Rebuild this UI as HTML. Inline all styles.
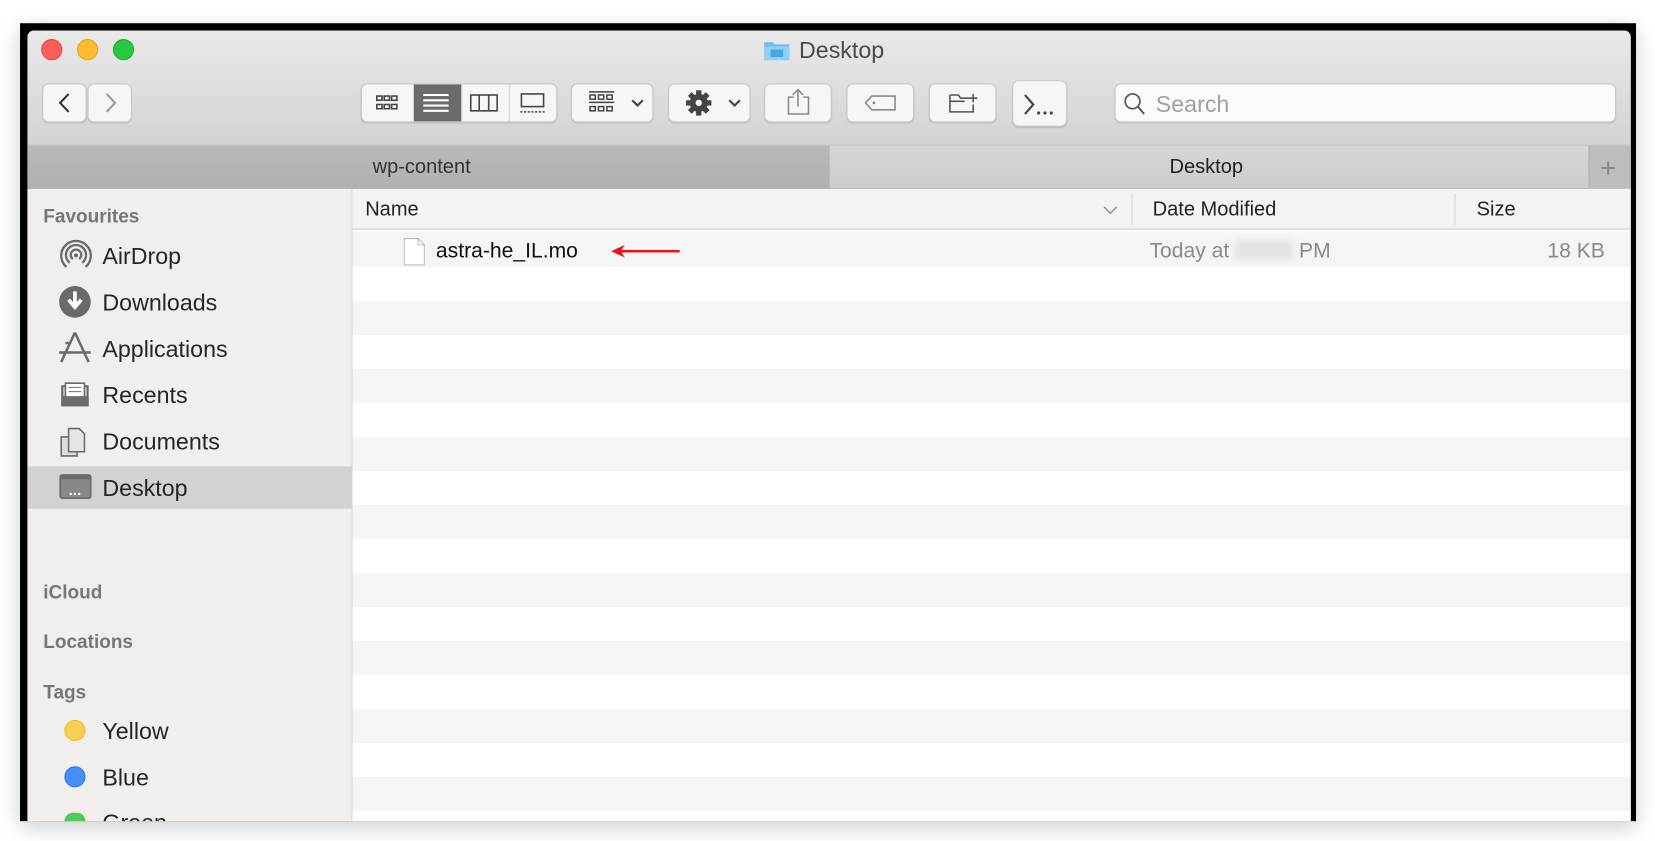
<!DOCTYPE html>
<html><head><meta charset="utf-8"><style>
*{margin:0;padding:0;box-sizing:border-box}
html,body{width:1655px;height:841px;overflow:hidden;background:#fff;font-family:"Liberation Sans",Helvetica,Arial,sans-serif}
#s{position:absolute;left:0;top:0;width:1568px;height:797px;transform:scale(1.0555);transform-origin:0 0}
.a{position:absolute}
.btn{position:absolute;background:#f6f6f6;border:1px solid #c9c9c9;border-radius:6px;box-shadow:0 1px 1px rgba(0,0,0,.12)}
.t{position:absolute;font-size:22px;color:#262626;white-space:nowrap}
.h{position:absolute;font-size:18px;color:#7a7676;font-weight:bold}
.ic{position:absolute}
</style></head><body><div id="s">
<div class="a" style="left:19px;top:22px;width:1531px;height:756px;background:#000;box-shadow:0 6px 20px rgba(0,0,0,.2)"></div>
<div class="a" style="left:26px;top:29px;width:1519px;height:749px;background:#fff;border-radius:6px 6px 0 0;overflow:hidden">
 <div class="a" style="left:0;top:0;width:1519px;height:109px;background:linear-gradient(#e9e9e9,#d3d3d3);border-bottom:1px solid #b8b8b8"></div>
</div>
<div class="a" style="left:39px;top:37px;width:20px;height:20px;border-radius:50%;background:#fd5f57;border:1px solid #e0443e"></div>
<div class="a" style="left:73px;top:37px;width:20px;height:20px;border-radius:50%;background:#febc2e;border:1px solid #dea123"></div>
<div class="a" style="left:107px;top:37px;width:20px;height:20px;border-radius:50%;background:#28c840;border:1px solid #1aab29"></div>
<svg class="ic" style="left:723px;top:37px" width="26" height="21"><path d="M1 3h8l2 2h14v15H1z" fill="#6fbdf0"/><rect x="1" y="7" width="24" height="13" fill="#8fd0f8"/><rect x="7" y="10" width="12" height="7" fill="#4aa5e0"/></svg>
<div class="t" style="left:757px;top:35px;color:#4a4a4a">Desktop</div>
<div class="btn" style="left:40px;top:79px;width:42px;height:37px"></div>
<div class="btn" style="left:83px;top:79px;width:42px;height:37px"></div>
<svg class="ic" style="left:40px;top:79px" width="86" height="37"><path d="M25 10l-8 8.5 8 8.5" stroke="#333" stroke-width="2" fill="none"/><path d="M61 10l8 8.5-8 8.5" stroke="#9a9a9a" stroke-width="2" fill="none"/></svg>
<div class="btn" style="left:342px;top:79px;width:186px;height:37px;overflow:hidden">
 <div class="a" style="left:49px;top:-1px;width:45px;height:39px;background:#6b6b6b"></div>
 <div class="a" style="left:94px;top:0;width:1px;height:37px;background:#d0d0d0"></div>
 <div class="a" style="left:139px;top:0;width:1px;height:37px;background:#d0d0d0"></div>
</div>
<svg class="ic" style="left:342px;top:79px" width="186" height="37"><g fill="none" stroke="#444" stroke-width="1.5"><rect x="15" y="12" width="5" height="4"/><rect x="22" y="12" width="5" height="4"/><rect x="29" y="12" width="5" height="4"/><rect x="15" y="20" width="5" height="4"/><rect x="22" y="20" width="5" height="4"/><rect x="29" y="20" width="5" height="4"/><rect x="104" y="11" width="25" height="15"/><path d="M112 11v15M121 11v15"/><rect x="152" y="10" width="21" height="12"/><path d="M151 27h24" stroke-dasharray="2 1.5"/></g><path d="M59 11h24M59 16h24M59 21h24M59 26h24" stroke="#fff" stroke-width="2"/></svg>
<div class="btn" style="left:541px;top:79px;width:78px;height:37px"></div>
<svg class="ic" style="left:541px;top:79px" width="78" height="37"><g fill="none" stroke="#444" stroke-width="1.4"><path d="M17 8h24M17 18h24"/><rect x="18" y="11" width="5" height="4"/><rect x="26" y="11" width="5" height="4"/><rect x="34" y="11" width="5" height="4"/><rect x="18" y="22" width="5" height="4"/><rect x="26" y="22" width="5" height="4"/><rect x="34" y="22" width="5" height="4"/><path d="M58 16l5 5 5-5" stroke-width="2"/></g></svg>
<div class="btn" style="left:633px;top:79px;width:78px;height:37px"></div>
<svg class="ic" style="left:633px;top:79px" width="78" height="37"><g transform="translate(29 18.5)"><circle r="8.5" fill="#444"/><g fill="#444"><rect x="-2.5" y="-12" width="5" height="24"/><rect x="-2.5" y="-12" width="5" height="24" transform="rotate(45)"/><rect x="-2.5" y="-12" width="5" height="24" transform="rotate(90)"/><rect x="-2.5" y="-12" width="5" height="24" transform="rotate(135)"/></g><circle r="3" fill="#f6f6f6"/></g><path d="M58 16l5 5 5-5" stroke="#444" stroke-width="2" fill="none"/></svg>
<div class="btn" style="left:724px;top:79px;width:64px;height:37px"></div>
<svg class="ic" style="left:724px;top:79px" width="64" height="37"><path d="M28 13h-5v16h19V13h-5M32 6v16M27 11l5-5 5 5" stroke="#8a8a8a" stroke-width="1.5" fill="none"/></svg>
<div class="btn" style="left:802px;top:79px;width:64px;height:37px"></div>
<svg class="ic" style="left:802px;top:79px" width="64" height="37"><path d="M24 12h22v13H24l-6-6.5z" stroke="#8a8a8a" stroke-width="1.5" fill="none"/><circle cx="26" cy="18.5" r="1.3" fill="#8a8a8a"/></svg>
<div class="btn" style="left:880px;top:79px;width:64px;height:37px"></div>
<svg class="ic" style="left:880px;top:79px" width="64" height="37"><path d="M20 11h8l2 3h11M20 11v16h22v-7M20 17h14M42 10v8M38 14h8" stroke="#555" stroke-width="1.5" fill="none"/></svg>
<div class="btn" style="left:959px;top:76px;width:52px;height:44px"></div>
<svg class="ic" style="left:959px;top:76px" width="52" height="44"><path d="M12 14l8 9-8 9" stroke="#444" stroke-width="2" fill="none"/><circle cx="25" cy="31" r="1.5" fill="#444"/><circle cx="31" cy="31" r="1.5" fill="#444"/><circle cx="37" cy="31" r="1.5" fill="#444"/></svg>
<div class="btn" style="left:1056px;top:79px;width:475px;height:37px;background:#fafafa"></div>
<svg class="ic" style="left:1064px;top:87px" width="24" height="24"><circle cx="9" cy="9" r="7" stroke="#555" stroke-width="1.6" fill="none"/><path d="M14 14l6 7" stroke="#555" stroke-width="1.8"/></svg>
<div class="t" style="left:1095px;top:86px;color:#a0a0a0">Search</div>
<!-- tabs -->
<div class="a" style="left:26px;top:138px;width:759px;height:41px;background:linear-gradient(#b9b9b9,#b0b0b0);border-bottom:1px solid #a7a7a7"></div>
<div class="a" style="left:785px;top:138px;width:720px;height:41px;background:linear-gradient(#d6d6d6,#cdcdcd);border-left:1px solid #a9a9a9;border-bottom:1px solid #b0b0b0"></div>
<div class="a" style="left:1505px;top:138px;width:40px;height:41px;background:#bdbdbd;border-left:1px solid #a9a9a9"></div>
<div class="t" style="left:1516px;top:144px;color:#8a8a8a;font-size:26px">+</div>
<div class="t" style="left:353px;top:148px;font-size:19px;color:#333">wp-content</div>
<div class="t" style="left:1108px;top:148px;font-size:19px;color:#222">Desktop</div>
<!-- sidebar -->
<div class="a" style="left:26px;top:179px;width:308px;height:599px;background:#f1eeeb;border-right:1px solid #d6d4d2"></div>
<div class="a" style="left:26px;top:442px;width:307px;height:40px;background:#d4d1ce"></div>
<div class="h" style="left:41px;top:195px">Favourites</div>
<div class="t" style="left:97px;top:230px">AirDrop</div>
<div class="t" style="left:97px;top:274px">Downloads</div>
<div class="t" style="left:97px;top:318px">Applications</div>
<div class="t" style="left:97px;top:362px">Recents</div>
<div class="t" style="left:97px;top:406px">Documents</div>
<div class="t" style="left:97px;top:450px">Desktop</div>
<div class="h" style="left:41px;top:551px">iCloud</div>
<div class="h" style="left:41px;top:598px">Locations</div>
<div class="h" style="left:41px;top:646px">Tags</div>
<div class="a" style="left:61px;top:682px;width:20px;height:20px;border-radius:50%;background:#f8cf52;border:1px solid #f0bb20"></div>
<div class="t" style="left:97px;top:680px">Yellow</div>
<div class="a" style="left:61px;top:726px;width:20px;height:20px;border-radius:50%;background:#478ef8;border:1px solid #2a76ef"></div>
<div class="t" style="left:97px;top:724px">Blue</div>
<div class="a" style="left:61px;top:770px;width:20px;height:8px;border-radius:10px 10px 0 0;background:#4fcb5a"></div>
<div class="a" style="left:97px;top:767px;height:11px;overflow:hidden"><div style="font-size:22px;color:#262626">Green</div></div>
<svg class="ic" style="left:55px;top:226px" width="34" height="250"><g fill="none" stroke="#6c6a68" stroke-width="2.2"><path d="M8 27a14 14 0 1 1 18 0M11 23a9.5 9.5 0 1 1 12 0M14 19.5a5 5 0 1 1 6 0"/></g><circle cx="17" cy="16" r="2" fill="#6c6a68"/>
<circle cx="16" cy="60" r="15" fill="#6c6a68"/><path d="M16 50v14M10 58l6 7 6-7" stroke="#fff" stroke-width="3.5" fill="none"/>
<g stroke="#6c6a68" stroke-width="2.4" fill="none"><path d="M16 89L3 117M16 89l13 28M1 108h30M10 99l-3 0"/></g>
<path d="M4 140h24v18H4zM4 150h24" stroke="#6c6a68" stroke-width="2" fill="#dcd9d6"/><path d="M7 137h18v13H7z" fill="#fff" stroke="#6c6a68" stroke-width="1.5"/><path d="M10 141h12M10 145h12" stroke="#6c6a68"/><rect x="3" y="151" width="26" height="8" fill="#6c6a68"/>
<path d="M3 188h11l4 4v14H3z" fill="#ddd" stroke="#6c6a68" stroke-width="1.5"/><path d="M10 180h10l5 5v17H10z" fill="#e8e6e4" stroke="#6c6a68" stroke-width="1.5"/>
<rect x="2" y="224" width="29" height="22" rx="2" fill="#8a8886" stroke="#6c6a68" stroke-width="1.5"/><rect x="2" y="224" width="29" height="4" fill="#6c6a68"/><path d="M11 242h2M15 242h2M19 242h2" stroke="#fff" stroke-width="2"/></svg>
<!-- list header -->
<div class="a" style="left:334px;top:179px;width:1211px;height:39px;background:#f3f3f3;border-bottom:2px solid #e0e0e0"></div>
<div class="a" style="left:1072px;top:183px;width:1px;height:30px;background:#d6d6d6"></div>
<div class="a" style="left:1378px;top:183px;width:1px;height:30px;background:#d6d6d6"></div>
<div class="t" style="left:346px;top:188px;font-size:19px;color:#222">Name</div>
<svg class="ic" style="left:1045px;top:194px" width="14" height="10"><path d="M1 2l6 6 6-6" stroke="#999" stroke-width="1.5" fill="none"/></svg>
<div class="t" style="left:1092px;top:188px;font-size:19px;color:#222">Date Modified</div>
<div class="t" style="left:1399px;top:188px;font-size:19px;color:#222">Size</div>
<!-- rows -->
<div class="a" style="left:334px;top:220px;width:1211px;height:33px;background:#f4f5f5"></div>
<div class="a" style="left:334px;top:253px;width:1211px;height:525px;background:repeating-linear-gradient(#fff 0 32.2px,#f4f5f5 32.2px 64.4px);"></div>
<svg class="ic" style="left:382px;top:225px" width="22" height="27"><path d="M1 1h13l6 6v19H1z" fill="#fff" stroke="#bdbdbd"/><path d="M14 1v6h6" fill="none" stroke="#bdbdbd"/></svg>
<div class="t" style="left:413px;top:227px;font-size:20px;color:#111">astra-he_IL.mo</div>
<svg class="ic" style="left:578px;top:230px" width="68" height="16"><path d="M66 8H8" stroke="#e8141a" stroke-width="2.5"/><path d="M1 8l13-6-4 6 4 6z" fill="#e8141a"/></svg>
<div class="t" style="left:1089px;top:227px;font-size:20px;color:#8a8a8a">Today at <span style="display:inline-block;width:55px;height:18px;background:#e3e3e3;filter:blur(3px);vertical-align:-2px"></span> PM</div>
<div class="t" style="left:1466px;top:227px;font-size:20px;color:#8a8a8a">18 KB</div>
</div></body></html>
